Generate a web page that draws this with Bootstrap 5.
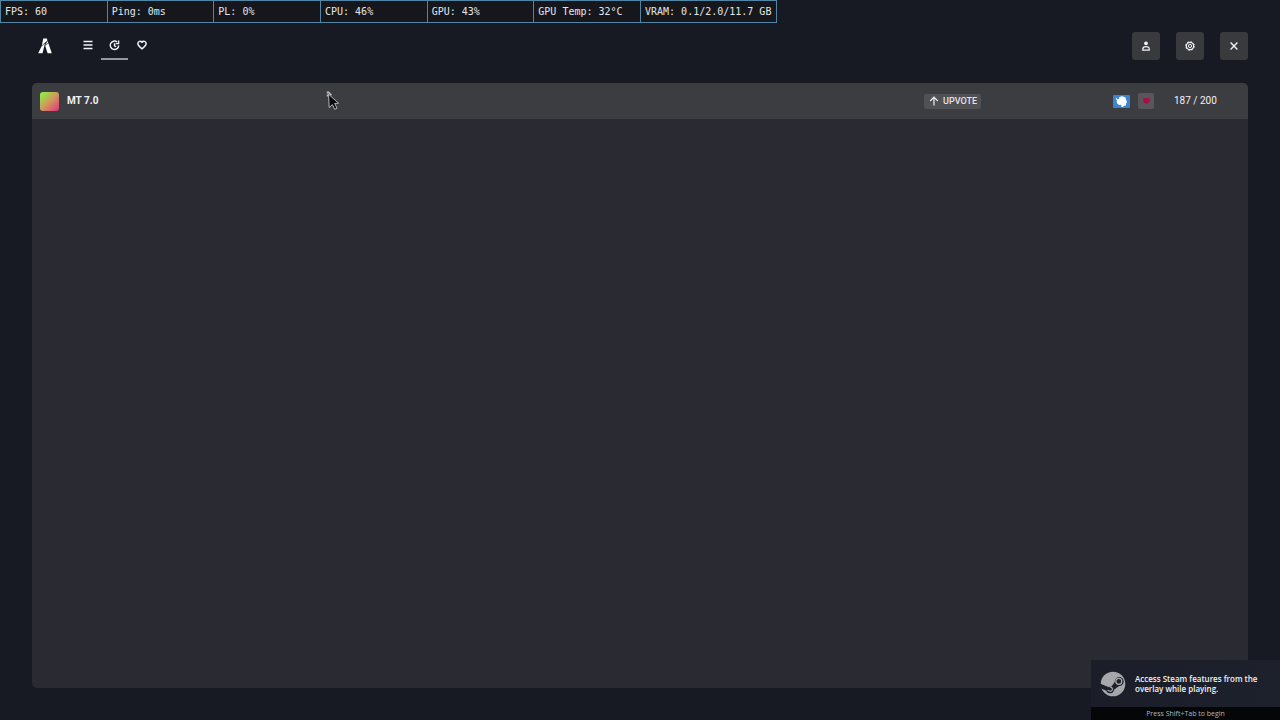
<!DOCTYPE html>
<html lang="en">
<head>
<meta charset="utf-8">
<meta name="viewport" content="width=device-width, initial-scale=1">
<title>Server history</title>
<link href="https://cdn.jsdelivr.net/npm/bootstrap@5.3.0/dist/css/bootstrap.min.css" rel="stylesheet">
<style>
body { background: #171923; color: #f2f2f4; font-family: Roboto, "Liberation Sans", sans-serif; font-size: 10px; line-height: 16px; }
svg { display: block; }
.stats { display: grid; grid-template-columns: repeat(6, 1fr) 137px; max-width: 777px; font-family: "DejaVu Sans Mono", monospace; font-size: 10px; line-height: 21px; color: #e4e6e8; }
.stat { padding: 0 4px; background: #15171c; border: 1px solid #4f86a6; border-right: 0; white-space: nowrap; }
.stat:last-child { border-right: 1px solid #4f86a6; }
.topbar { padding: 9px 32px 0 38px; margin-bottom: 23px; }
.tabs { margin-left: 22px; }
.tab-btn { width: 27px; height: 28px; padding: 0; border: 0; border-bottom: 2px solid transparent; border-radius: 0; color: #f4f4f8; }
.tab-btn:hover { color: #fff; }
.tab-btn.current { border-bottom-color: #96969f; }
.tool-btn { width: 28px; height: 28px; padding: 0; border: 0; border-radius: 3px; background: #393a3e; color: #f0f0f2; }
.tool-btn:hover { background: #46474c; color: #fff; }
.panel { margin: 0 32px 32px; background: #292a32; border-radius: 5px; overflow: hidden; }
.server { height: 36px; padding: 0 30px 0 8px; background: #3c3d41; }
.server-icon { width: 19px; height: 19px; border-radius: 3px; background: linear-gradient(135deg, #8bf243 5%, #cf9a5c 50%, #e62f80 100%); }
.server-name { font-size: 10px; font-weight: 700; margin-left: 8px; }
.upvote { height: 15px; padding: 0 4px 0 5px; border: 0; border-radius: 2px; background: #505155; color: #e4e4e6; font-size: 9px; line-height: 15px; font-weight: 500; margin-right: 132px; }
.upvote:hover { background: #5e5f64; color: #fff; }
.flag { margin-right: 8px; }
.boost { width: 16px; height: 16px; border-radius: 2px; background: #56565b; }
.players { width: 44px; margin-left: 20px; white-space: nowrap; }
.pointer { position: absolute; left: 326px; top: 90px; pointer-events: none; }
.steam { position: absolute; right: 0; bottom: 0; width: 189px; background: linear-gradient(90deg, #1b1e28, #1d212b); font-family: "Open Sans", "Noto Sans", sans-serif; }
.steam-body { height: 47px; padding: 0 9px; gap: 9px; }
.steam-text { font-size: 8px; line-height: 10px; font-weight: 600; color: #f0f1f3; white-space: nowrap; }
.steam-foot { height: 13px; font-size: 7px; line-height: 13px; color: #b5b6b8; background: #050608; }
</style>
</head>
<body class="d-flex flex-column min-vh-100 position-relative">
<div class="stats">
  <div class="stat">FPS: 60</div>
  <div class="stat">Ping: 0ms</div>
  <div class="stat">PL: 0%</div>
  <div class="stat">CPU: 46%</div>
  <div class="stat">GPU: 43%</div>
  <div class="stat">GPU Temp: 32°C</div>
  <div class="stat">VRAM: 0.1/2.0/11.7 GB</div>
</div>
<header class="topbar d-flex align-items-center">
  <a href="#" aria-label="Home" class="text-white">
    <svg width="14" height="16" viewBox="0 0 14 16" fill="currentColor"><path d="M5.200.5h3.700l.5 1.900-5.500 5zM9.700 3.100l.5 1.600-3.200 2.600zM3.500 8.400 6.900 5.600 4.500 15.300H.2zM7.200 7.700l3.200-2.500 3.400 10.100H9.600z"/></svg>
  </a>
  <nav class="tabs d-flex" aria-label="Server lists">
    <button type="button" class="btn tab-btn d-flex align-items-center justify-content-center" aria-label="All servers">
      <svg width="10" height="10" viewBox="0 0 10 10" stroke="currentColor" stroke-width="1.300"><path d="M.5 1.500h9M.5 5h9M.5 8.500h9"/></svg>
    </button>
    <button type="button" class="btn tab-btn current d-flex align-items-center justify-content-center" aria-label="History" aria-current="page">
      <svg width="11" height="11" viewBox="0 0 11 11" fill="none" stroke="currentColor" stroke-width="1.400"><path d="M8 1.900A4.200 4.200 0 1 0 9.700 5.400M9.600.6v3H6.700M5.500 3.300v2.600l1.700.8"/></svg>
    </button>
    <button type="button" class="btn tab-btn d-flex align-items-center justify-content-center" aria-label="Favorites">
      <svg width="10" height="10" viewBox="0 0 10 10" fill="none" stroke="currentColor" stroke-width="1.500" stroke-linejoin="round"><path d="M5 8.800C3 7.400.9 5.800.9 3.600.9 1.100 3.800.6 5 2.400 6.200.6 9.100 1.100 9.100 3.600 9.100 5.800 7 7.400 5 8.800z"/></svg>
    </button>
  </nav>
  <div class="d-flex gap-3 ms-auto">
    <button type="button" class="btn tool-btn d-flex align-items-center justify-content-center" aria-label="Account">
      <svg width="8" height="10" viewBox="0 0 8 10" fill="none" stroke="currentColor" stroke-width="1.300"><circle cx="4" cy="2.300" r="1.900" fill="currentColor" stroke="none"/><path d="M.8 9.100V7.900C.8 6.400 2 5.600 4 5.600s3.200.8 3.200 2.300v1.200z"/></svg>
    </button>
    <button type="button" class="btn tool-btn d-flex align-items-center justify-content-center" aria-label="Settings">
      <svg width="10" height="10" viewBox="0 0 10 10" fill="none" stroke="currentColor"><circle cx="5" cy="5" r="3.700" stroke-width="1.300"/><circle cx="5" cy="5" r="4.400" stroke-width=".8" stroke-dasharray="1.700 1.750"/><circle cx="5" cy="5" r="1.600"/></svg>
    </button>
    <button type="button" class="btn tool-btn d-flex align-items-center justify-content-center" aria-label="Close">
      <svg width="8" height="8" viewBox="0 0 8 8" stroke="currentColor" stroke-width="1.400"><path d="m.6.6 6.800 6.800M7.400.6.6 7.400"/></svg>
    </button>
  </div>
</header>
<main class="panel flex-grow-1">
  <div class="server d-flex align-items-center">
    <div class="server-icon"></div>
    <div class="server-name flex-grow-1">MT 7.0</div>
    <button type="button" class="btn upvote d-flex align-items-center gap-1">
      <svg width="10" height="10" viewBox="0 0 10 10" fill="none" stroke="currentColor" stroke-width="1.300"><path d="M5 9.500V1.200M1.200 5 5 1.200 8.800 5"/></svg>
      <span>UPVOTE</span>
    </button>
    <svg class="flag" width="17" height="13" viewBox="0 0 17 13" role="img" aria-label="Antarctica"><rect width="17" height="13" rx="1" fill="#3c83d2"/><path fill="#fff" d="M3 2.500 4.400 4.200 6 4 6.200 2.200 8.500 1.200 11 1.800 12.600 2.800 13 4.800 14 6.600 13.200 8.600 12.800 10.500 10.800 11 9.800 12 8 11.400 8.300 9.800 6 10 4.200 8.600 3.600 6.500 4 5.200 2.900 4z"/></svg>
    <div class="boost d-flex align-items-center justify-content-center">
      <svg width="7" height="6" viewBox="0 0 7 6" fill="#aa0f43"><path d="M3.500 6C1.500 5.200 0 4 0 2.200 0-.2 2.500-.4 3.500.5 4.500-.4 7-.2 7 2.200 7 4 5.500 5.200 3.500 6z"/></svg>
    </div>
    <div class="players">187 / 200</div>
  </div>
</main>
<svg class="pointer" width="14" height="20" viewBox="0 0 14 20"><path d="M1.500 1.500v5.400" stroke="#bcbcbe" stroke-width="1.500" stroke-dasharray="2 1"/><path d="M2 1.800 5.500 5.200" stroke="#c4c4c6" stroke-width="1.500"/><path d="M2.500 4.200 12.600 13.200l-3.900.3 2.300 4.700-2.300 1.100-2.300-4.700-3.200 3z" fill="#08090b" stroke="#c4c4c6" stroke-width=".9"/></svg>
<aside class="steam">
  <div class="steam-body d-flex align-items-center">
    <svg width="26" height="26" viewBox="0 0 26 26"><circle cx="13" cy="13" r="12.300" fill="#a5a7aa"/><path d="M0 12.500 8.200 16l3.300-.5 3.200-4.500a4.500 4.500 0 1 1 4.300 4.100l-5 3.600a4 4 0 0 1-7.700 1L0 17z" fill="#1d202a"/><circle cx="18.800" cy="10.300" r="3" fill="none" stroke="#a5a7aa" stroke-width="1.300"/><path d="m7.500 19.300 1.800.7a2.100 2.100 0 1 0 1.400-3.900l-1-.4" fill="none" stroke="#a5a7aa" stroke-width="1.200"/></svg>
    <div class="steam-text">Access Steam features from the<br>overlay while playing.</div>
  </div>
  <div class="steam-foot text-center">Press Shift+Tab to begin</div>
</aside>
<script src="https://cdn.jsdelivr.net/npm/bootstrap@5.3.0/dist/js/bootstrap.bundle.min.js"></script>
</body>
</html>
